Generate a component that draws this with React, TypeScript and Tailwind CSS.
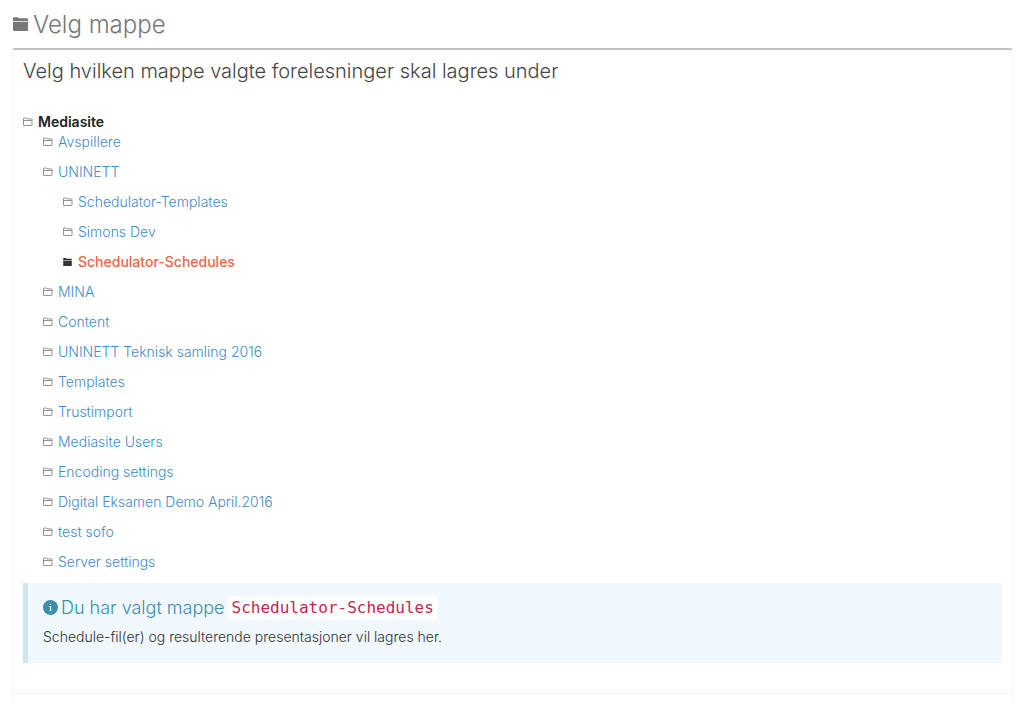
type IconProps = { className: string };

function FolderOutline({ className }: IconProps) {
  return (
    <svg viewBox="0 0 10 10" className={className} fill="none" stroke="currentColor" aria-hidden="true">
      <path d="M.5 8V1.500Q.5 1 1 1h2.300l.7.900h4.500Q9 1.900 9 2.400V8q0 .5-.5.5H1Q.5 8.500.5 8Z" strokeWidth=".8" />
      <path d="M.5 3.500H9" strokeWidth=".8" />
    </svg>
  );
}

function FolderSolid({ className }: IconProps) {
  return (
    <svg viewBox="0 0 15 14" className={className} fill="currentColor" aria-hidden="true">
      <path d="M0 4V1.200Q0 .2 1 .2h3.600q.6 0 .9.500l.4.600H14q1 0 1 1V4Z" />
      <path d="M0 4.700h15V13q0 1-1 1H1q-1 0-1-1Z" />
    </svg>
  );
}

function InfoCircle({ className }: IconProps) {
  return (
    <svg viewBox="0 0 15 15" className={className} aria-hidden="true">
      <circle cx="7.500" cy="7.500" r="7.500" fill="currentColor" />
      <path d="M6.900 3.800h1.200v1.300H6.900ZM6.400 6h1.700v4h.5v.7H6.400V10h.5V6.700h-.5Z" fill="#fff" />
    </svg>
  );
}

type Folder = { name: string; children?: Folder[] };

const folders: Folder[] = [
  { name: "Avspillere" },
  {
    name: "UNINETT",
    children: [{ name: "Schedulator-Templates" }, { name: "Simons Dev" }, { name: "Schedulator-Schedules" }],
  },
  { name: "MINA" },
  { name: "Content" },
  { name: "UNINETT Teknisk samling 2016" },
  { name: "Templates" },
  { name: "Trustimport" },
  { name: "Mediasite Users" },
  { name: "Encoding settings" },
  { name: "Digital Eksamen Demo April.2016" },
  { name: "test sofo" },
  { name: "Server settings" },
];

const selected = "Schedulator-Schedules";

function FolderList({ items }: { items: Folder[] }) {
  return (
    <ul className="pl-5">
      {items.map((item) => {
        const active = item.name === selected;
        return (
          <li key={item.name}>
            <a
              href="#"
              className={
                active
                  ? "mb-2.5 flex h-5 items-center gap-[5px] font-medium text-[#f0654a]"
                  : "mb-2.5 flex h-5 items-center gap-[5px] text-[#428bca]"
              }
            >
              {active ? (
                <FolderSolid className="mr-px h-2 w-[9px] text-[#333]" />
              ) : (
                <FolderOutline className="size-2.5 text-[#777]" />
              )}
              {item.name}
            </a>
            {item.children && <FolderList items={item.children} />}
          </li>
        );
      })}
    </ul>
  );
}

export default function App() {
  return (
    <main className="flex min-h-screen flex-col bg-white pr-[5px] pl-3 font-['Inter','Liberation_Sans',sans-serif] text-sm leading-5 font-light text-[#333]">
      <h1 className="flex h-12 items-center gap-[5px] pt-px pl-px text-2xl text-[#777]">
        <FolderSolid className="mb-0.5 h-3.5 w-[15px]" />
        Velg mappe
      </h1>
      <section className="flex flex-1 flex-col rounded-t-[3px] border-x border-t-2 border-x-[#f4f4f4] border-t-[#c1c1c1]">
        <div className="px-2.5 pt-[9px] pb-[30px]">
          <h2 className="mb-[29px] text-xl leading-6 text-[#444]">Velg hvilken mappe valgte forelesninger skal lagres under</h2>
          <div className="flex h-5 items-center gap-[5px] font-semibold text-[#222]">
            <FolderOutline className="size-2.5 text-[#777]" />
            Mediasite
          </div>
          <FolderList items={folders} />
          <div className="mt-[11px] h-20 border-l-5 border-[#d0e3f0] bg-[#f0f7fd] px-[15px] pt-[13px]">
            <h3 className="flex h-6 items-center gap-[3px] text-lg text-[#3c8db0]">
              <InfoCircle className="mb-0.5 size-[15px]" />
              Du har valgt mappe
              <code className="rounded bg-white px-1 font-['DejaVu_Sans_Mono',monospace] text-base leading-6 font-normal text-[#c7254e]">
                {selected}
              </code>
            </h3>
            <p className="mt-[7px]">Schedule-fil(er) og resulterende presentasjoner vil lagres her.</p>
          </div>
        </div>
        <footer className="border-t border-[#f4f4f4]" />
      </section>
    </main>
  );
}
